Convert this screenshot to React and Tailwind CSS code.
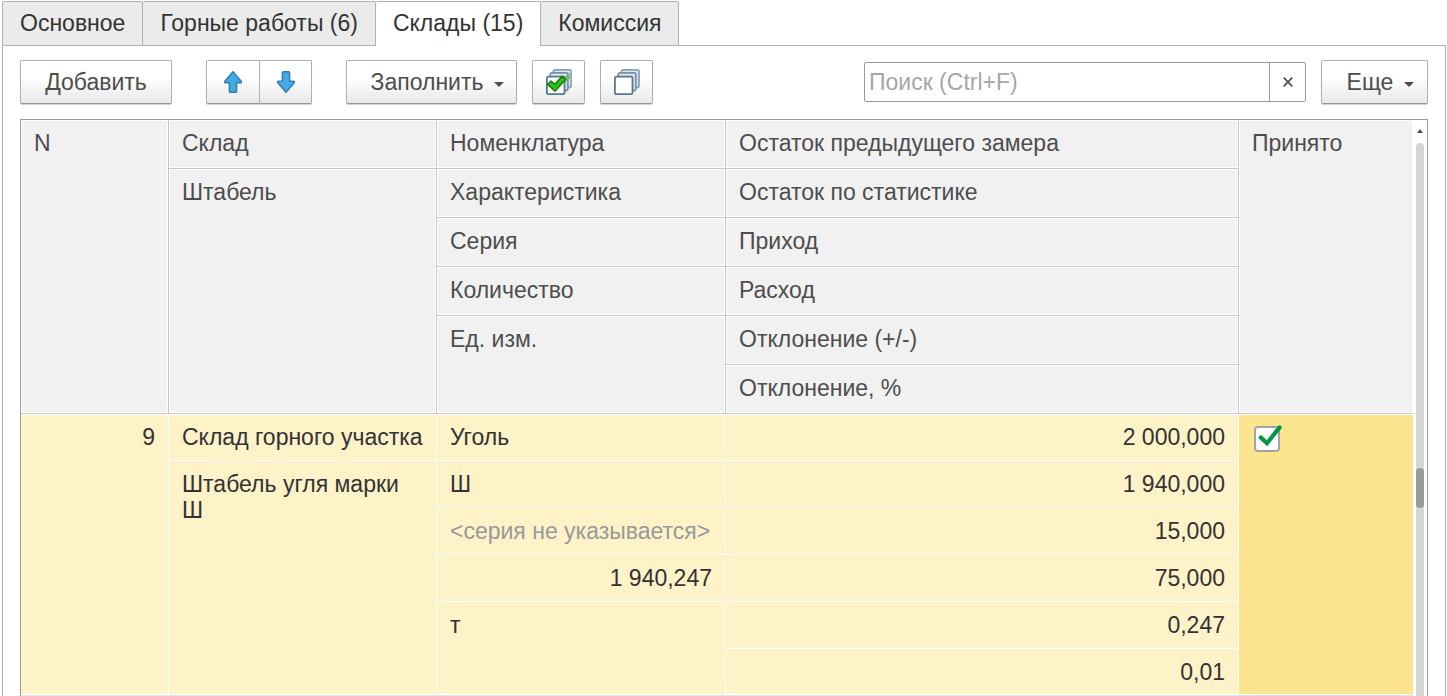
import React, { useState } from "react";
import clsx from "clsx";

const tabs = ["Основное", "Горные работы (6)", "Склады (15)", "Комиссия"];

const buttonClass =
    "flex h-11 items-center justify-center border border-[#b0b0b0] border-b-[#969696] bg-linear-to-b from-white from-40% to-[#e8e8e8] text-[#4d4d4d] shadow-[0_1px_1px_#d0d0d0]";

const ArrowIcon = ({ down }) => (
    <svg width="20" height="24" viewBox="0 0 20 24" className={clsx(down && "rotate-180")}>
        <path
            d="M10 1.8 L18.3 11.6 Q18.6 12.6 17.6 12.8 L13.6 12.8 L13.6 21.4 Q13.6 22.3 12.7 22.3 L7.3 22.3 Q6.4 22.3 6.4 21.4 L6.4 12.8 L2.4 12.8 Q1.4 12.6 1.7 11.6 Z"
            fill="#45abe8"
            stroke="#2f7fb0"
            strokeWidth="1.5"
            strokeLinejoin="round"
        />
    </svg>
);

const StackIcon = ({ checked }) => (
    <svg width="28" height="28" viewBox="0 0 28 28" strokeWidth="1.8">
        <rect x="8.4" y="1.9" width="17.6" height="17.6" rx="1.5" fill="#dfe5ea" stroke="#8aa2b5" />
        {checked && <path d="M21 8 L26 3 L26 9 L21 15Z" fill="#8fc98a" />}
        <rect x="5.2" y="4.9" width="17.6" height="17.6" rx="1.5" fill="#dfe5ea" stroke="#7593a9" />
        {checked && <path d="M17 12 L22.5 6 L22.5 12 L18 17Z" fill="#7cbf78" />}
        <rect x="1.9" y="8.6" width="17.6" height="17.6" rx="1.5" fill="#fff" stroke="#54788f" />
        {checked && (
            <path
                d="M2.6 16.4 L6 13 L9.8 16.2 L17.2 8.2 L20.6 11.4 L10 23.2 Z"
                fill="#2cc211"
                stroke="#17780c"
                strokeWidth="1.4"
                strokeLinejoin="round"
            />
        )}
    </svg>
);

const Caret = () => (
    <svg width="10" height="5" viewBox="0 0 10 5" className="mt-1">
        <path d="M0 0H10L5 5Z" fill="#4d4d4d" />
    </svg>
);

const HeadCell = ({ children, last, ...props }) => (
    <th
        className={clsx(
            "h-[49px] border-b border-[#c6c6c6] bg-[#f1f1f1] px-[13px] pt-[10px] text-left align-top font-normal text-[#4d4d4d] shadow-[inset_0_0_0_1px_#fff]",
            !last && "border-r"
        )}
        {...props}
    >
        {children}
    </th>
);

const Cell = ({ children, right, muted, first, ...props }) => (
    <td
        className={clsx(
            "border-r border-b border-white bg-[#fdf2c8] px-[13px] pt-[10px] align-top",
            right && "text-right",
            muted ? "text-[#999999]" : "text-[#333333]",
            first && "shadow-[inset_0_1px_0_#fff]"
        )}
        {...props}
    >
        {children}
    </td>
);

const Tabs = ({ active, onChange }) => (
    <div role="tablist" className="flex">
        {tabs.map((name, i) => (
            <button
                key={name}
                type="button"
                role="tab"
                aria-selected={active === i}
                onClick={() => onChange(i)}
                className={clsx(
                    "h-[45px] rounded-t-xs border-t border-r border-[#b0b0b0] px-[17px] pb-0.5 text-[#333333]",
                    i === 0 && "border-l",
                    active === i ? "bg-white" : "border-b bg-[#ebebeb]"
                )}
            >
                {name}
            </button>
        ))}
        <div className="grow border-b border-[#b0b0b0]"></div>
    </div>
);

const Toolbar = () => {
    const [search, setSearch] = useState("");

    return (
        <div className="flex items-center">
            <button type="button" className={clsx(buttonClass, "w-[152px] rounded-xs")}>
                Добавить
            </button>
            <div className="ml-[34px] flex">
                <button type="button" aria-label="Вверх" className={clsx(buttonClass, "w-[54px] rounded-l-xs")}>
                    <ArrowIcon />
                </button>
                <button type="button" aria-label="Вниз" className={clsx(buttonClass, "w-[52px] rounded-r-xs border-l-0")}>
                    <ArrowIcon down />
                </button>
            </div>
            <button type="button" className={clsx(buttonClass, "ml-[34px] w-[171px] gap-[11px] rounded-xs pl-3")}>
                Заполнить
                <Caret />
            </button>
            <button type="button" aria-label="Отметить все" className={clsx(buttonClass, "ml-[15px] w-[53px] rounded-xs")}>
                <StackIcon checked />
            </button>
            <button type="button" aria-label="Снять отметки" className={clsx(buttonClass, "ml-[15px] w-[53px] rounded-xs")}>
                <StackIcon />
            </button>

            <div className="ml-auto flex h-10 w-[442px] rounded-xs border border-[#999999] bg-white">
                <input
                    type="text"
                    aria-label="Поиск"
                    placeholder="Поиск (Ctrl+F)"
                    value={search}
                    onChange={(e) => setSearch(e.target.value)}
                    className="min-w-0 grow px-1 outline-none placeholder:text-[#a6a6a6]"
                />
                <button
                    type="button"
                    aria-label="Очистить"
                    onClick={() => setSearch("")}
                    className="flex w-9 items-center justify-center border-l border-[#999999]"
                >
                    <svg width="10" height="10" viewBox="0 0 10 10">
                        <path d="M0.7 0.7L9.3 9.3M9.3 0.7L0.7 9.3" stroke="#4d4d4d" strokeWidth="1.7" />
                    </svg>
                </button>
            </div>
            <button type="button" className={clsx(buttonClass, "ml-[15px] w-[107px] gap-[11px] rounded-xs pl-3")}>
                Еще
                <Caret />
            </button>
        </div>
    );
};

const StockTable = () => {
    const [accepted, setAccepted] = useState(true);

    return (
        <table className="w-full table-fixed border-separate border-spacing-0 border-b border-[#e0e0e0]">
            <colgroup>
                <col className="w-[148px]" />
                <col className="w-[268px]" />
                <col className="w-[289px]" />
                <col />
                <col className="w-[174px]" />
            </colgroup>
            <thead>
                <tr>
                    <HeadCell rowSpan={6}>N</HeadCell>
                    <HeadCell>Склад</HeadCell>
                    <HeadCell>Номенклатура</HeadCell>
                    <HeadCell>Остаток предыдущего замера</HeadCell>
                    <HeadCell rowSpan={6} last>Принято</HeadCell>
                </tr>
                <tr>
                    <HeadCell rowSpan={5}>Штабель</HeadCell>
                    <HeadCell>Характеристика</HeadCell>
                    <HeadCell>Остаток по статистике</HeadCell>
                </tr>
                <tr>
                    <HeadCell>Серия</HeadCell>
                    <HeadCell>Приход</HeadCell>
                </tr>
                <tr>
                    <HeadCell>Количество</HeadCell>
                    <HeadCell>Расход</HeadCell>
                </tr>
                <tr>
                    <HeadCell rowSpan={2}>Ед. изм.</HeadCell>
                    <HeadCell>Отклонение (+/-)</HeadCell>
                </tr>
                <tr>
                    <HeadCell>Отклонение, %</HeadCell>
                </tr>
            </thead>
            <tbody>
                <tr className="h-[47px]">
                    <Cell rowSpan={6} right first>9</Cell>
                    <Cell first>Склад горного участка</Cell>
                    <Cell first>Уголь</Cell>
                    <Cell right first>2 000,000</Cell>
                    <td
                        rowSpan={6}
                        className="border-b border-white bg-[#fde58f] px-[15px] pt-[10px] align-top shadow-[inset_0_1px_0_#fff]"
                    >
                        <label className="relative block size-[30px] pt-[2px]">
                            <input
                                type="checkbox"
                                aria-label="Принято"
                                checked={accepted}
                                onChange={(e) => setAccepted(e.target.checked)}
                                className="block size-[26px] appearance-none rounded-sm border-2 border-[#a3a3a3] bg-white"
                            />
                            {accepted && (
                                <svg width="30" height="30" viewBox="0 0 30 30" className="pointer-events-none absolute top-0 left-0">
                                    <path d="M6.8 13.4L13 19.2L25.6 3.4" fill="none" stroke="#009846" strokeWidth="4.2" strokeLinecap="round" />
                                </svg>
                            )}
                        </label>
                    </td>
                </tr>
                <tr className="h-[47px]">
                    <Cell rowSpan={5}>Штабель угля марки Ш</Cell>
                    <Cell>Ш</Cell>
                    <Cell right>1 940,000</Cell>
                </tr>
                <tr className="h-[47px]">
                    <Cell muted>&lt;серия не указывается&gt;</Cell>
                    <Cell right>15,000</Cell>
                </tr>
                <tr className="h-[47px]">
                    <Cell right>1 940,247</Cell>
                    <Cell right>75,000</Cell>
                </tr>
                <tr className="h-[47px]">
                    <Cell rowSpan={2}>т</Cell>
                    <Cell right>0,247</Cell>
                </tr>
                <tr className="h-[46px]">
                    <Cell right>0,01</Cell>
                </tr>
            </tbody>
        </table>
    );
};

const ScrollBar = ({ position }) => (
    <div className="flex w-[14px] shrink-0 flex-col items-center bg-white pt-[9px]">
        <svg width="6" height="4" viewBox="0 0 6 4">
            <path d="M3 0L6 4H0Z" fill="#4d4d4d" />
        </svg>
        <div className="relative mt-[10px] w-2 grow rounded-t-full bg-[#d5d5d5]">
            <div className="absolute h-10 w-2 rounded-full bg-[#999999]" style={{ top: `${position}%` }}></div>
        </div>
    </div>
);

const App = () => {
    const [active, setActive] = useState(2);

    return (
        <div className="flex h-screen flex-col overflow-hidden bg-white pt-px pr-px pl-[2px] font-['Liberation_Sans',Arial,sans-serif] text-[23px]/[26px]">
            <Tabs active={active} onChange={setActive} />
            <main className="flex min-h-0 grow flex-col border-x border-[#b0b0b0] px-[17px] pt-[14px]">
                <Toolbar />
                <div className="mt-[15px] flex min-h-0 grow border-x border-t border-[#999999]">
                    <div className="min-w-0 grow">
                        <StockTable />
                    </div>
                    <ScrollBar position={58.8} />
                </div>
            </main>
        </div>
    );
};

export default App;
